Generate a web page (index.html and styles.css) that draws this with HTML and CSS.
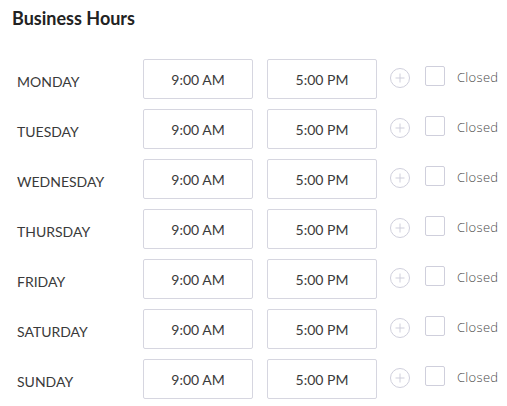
FILE: index.html
```html
<!DOCTYPE html>
<html lang="en">
<head>
  <meta charset="UTF-8">
  <meta name="viewport" content="width=device-width, initial-scale=1.0">
  <title>Business Hours</title>
  <link rel="stylesheet" href="styles.css">
</head>
<body>
  <h2 class="title">Business Hours</h2>

  <div class="hours" id="hours"></div>

  <script>
    const days = ['MONDAY', 'TUESDAY', 'WEDNESDAY', 'THURSDAY', 'FRIDAY', 'SATURDAY', 'SUNDAY'];
    const plusIcon = `<svg class="add" width="20" height="20" viewBox="0 0 20 20">
        <circle cx="10" cy="10" r="9.5" fill="none" stroke="#cfcfdc" stroke-width="1"/>
        <path d="M10 5.5v9M5.5 10h9" stroke="#cfcfdc" stroke-width="1" fill="none"/>
      </svg>`;

    const container = document.getElementById('hours');
    days.forEach(day => {
      const row = document.createElement('div');
      row.className = 'row';
      row.innerHTML = `
        <span class="day">${day}</span>
        <div class="time">9:00 AM</div>
        <div class="time">5:00 PM</div>
        ${plusIcon}
        <span class="check"></span>
        <span class="closed">Closed</span>`;
      container.appendChild(row);
    });
  </script>
</body>
</html>
```

FILE: styles.css
```css
body {
  margin: 0;
  padding: 8px 0 8px 12px;
  font-family: Lato, "Open Sans", sans-serif;
  background: #ffffff;
  color: #333;
}

.title {
  margin: 0 0 31px 0;
  font-size: 18px;
  line-height: 20px;
  font-weight: 700;
  color: #222;
}

.hours {
  display: flex;
  flex-direction: column;
  gap: 10px;
  padding-left: 5px;
}

.row {
  display: flex;
  align-items: center;
  height: 40px;
}

.row > * {
  flex: none;
}

.day {
  width: 126px;
  font-size: 14px;
  line-height: 17px;
  padding-top: 4px;
  color: #3a3a3a;
}

.time {
  box-sizing: border-box;
  width: 110px;
  height: 40px;
  border: 1px solid #d6d6e0;
  border-radius: 2px;
  display: flex;
  align-items: center;
  justify-content: center;
  font-size: 14px;
  color: #3a3a3a;
  margin-right: 14px;
}

.time + .time {
  margin-right: 13px;
}

.add {
  margin-top: -3px;
}

.check {
  box-sizing: border-box;
  width: 20px;
  height: 20px;
  margin-left: 15px;
  margin-top: -6px;
  border: 1px solid #cfcfdc;
  border-radius: 2px;
}

.closed {
  margin-left: 12px;
  margin-top: -5px;
  font-family: "Open Sans", sans-serif;
  font-weight: 300;
  font-size: 13px;
  letter-spacing: 0.3px;
  color: #4a4a4a;
}
```
